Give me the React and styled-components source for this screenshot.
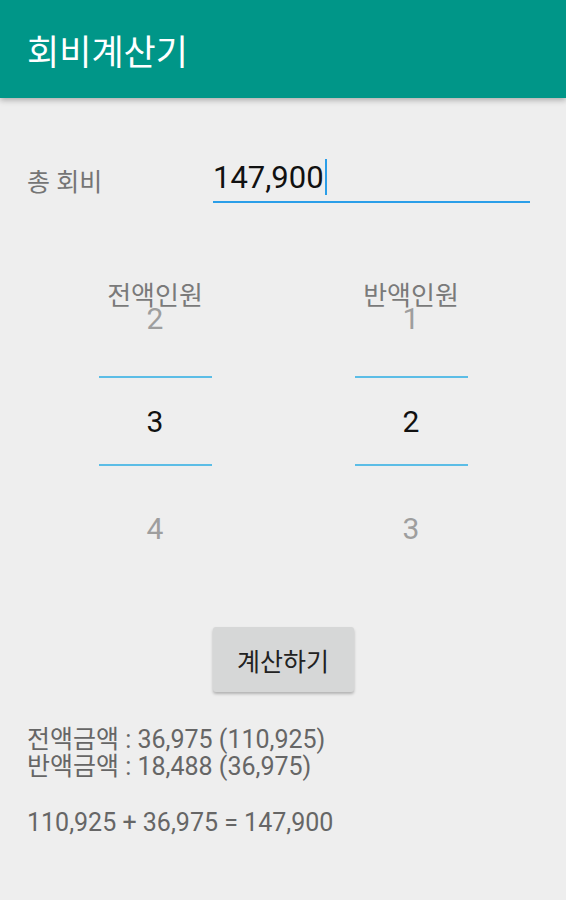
import styled, { createGlobalStyle } from "styled-components";

const GlobalStyle = createGlobalStyle`
	body {
		margin: 0;
		background: #eeeeee;
		font-family: Roboto, "Noto Sans CJK KR", sans-serif;
	}
`;

function Wheel({ label, prev, value, next }) {
	return (
		<WheelBox>
			<WheelLabel>{label}</WheelLabel>
			<Cell $height={110} $padBottom={6} $faded>
				{prev}
			</Cell>
			<Divider />
			<Cell $height={86}>{value}</Cell>
			<Divider />
			<Cell $height={110} $padTop={14} $faded>
				{next}
			</Cell>
		</WheelBox>
	);
}

function App() {
	return (
		<Screen>
			<GlobalStyle />
			<AppBar>
				<Title>회비계산기</Title>
			</AppBar>
			<Content>
				<FieldRow>
					<FieldLabel>총 회비</FieldLabel>
					<Input>
						147,900
						<Caret />
					</Input>
				</FieldRow>
				<Wheels>
					<Wheel label="전액인원" prev="2" value="3" next="4" />
					<Wheel label="반액인원" prev="1" value="2" next="3" />
				</Wheels>
				<ButtonRow>
					<Button>계산하기</Button>
				</ButtonRow>
				<Result>
					<div>전액금액 : 36,975 (110,925)</div>
					<div>반액금액 : 18,488 (36,975)</div>
					<Blank />
					<div>110,925 + 36,975 = 147,900</div>
				</Result>
			</Content>
		</Screen>
	);
}

const Screen = styled.div`
	width: 566px;
	height: 900px;
	background: #eeeeee;
	overflow: hidden;
`;

const AppBar = styled.header`
	height: 98px;
	padding: 0 27px;
	display: flex;
	align-items: center;
	background: #009688;
	box-shadow: 0 2px 6px rgba(0, 0, 0, 0.3);
	position: relative;
`;

const Title = styled.h1`
	margin: 0;
	color: #ffffff;
	font-size: 35px;
	font-weight: 400;
`;

const Content = styled.main`
	padding: 55px 27px 0;
`;

const FieldRow = styled.div`
	display: flex;
	align-items: center;
`;

const FieldLabel = styled.div`
	width: 186px;
	padding-top: 4px;
	font-size: 25px;
	color: #757575;
`;

const Input = styled.div`
	width: 317px;
	height: 48px;
	display: flex;
	align-items: center;
	font-size: 31px;
	color: #111111;
	border-bottom: 2px solid #2a9ee8;
`;

const Caret = styled.span`
	width: 2px;
	height: 36px;
	margin-left: 1px;
	background: #2a9ee8;
`;

const Wheels = styled.div`
	margin-top: 63px;
	display: grid;
	grid-template-columns: 1fr 1fr;
`;

const WheelBox = styled.div`
	width: 113px;
	justify-self: center;
	display: flex;
	flex-direction: column;
	position: relative;
`;

const WheelLabel = styled.div`
	position: absolute;
	top: 15px;
	left: -40px;
	right: -40px;
	text-align: center;
	font-size: 26px;
	line-height: 30px;
	color: #7a7a7a;
`;

const Cell = styled.div`
	height: ${(p) => p.$height}px;
	padding-top: ${(p) => p.$padTop || 0}px;
	padding-bottom: ${(p) => p.$padBottom || 0}px;
	box-sizing: border-box;
	display: flex;
	align-items: center;
	justify-content: center;
	font-size: 30px;
	color: ${(p) => (p.$faded ? "#9e9e9e" : "#111111")};
`;

const Divider = styled.div`
	height: 2px;
	background: #5bbde6;
`;

const ButtonRow = styled.div`
	margin-top: 51px;
	display: flex;
	justify-content: center;
`;

const Button = styled.button`
	width: 141px;
	height: 65px;
	border: none;
	border-radius: 3px;
	background: #d6d7d7;
	box-shadow: 0 2px 3px rgba(0, 0, 0, 0.25);
	font-family: Roboto, "Noto Sans CJK KR", sans-serif;
	font-size: 25px;
	color: #222222;
`;

const Result = styled.div`
	margin-top: 34px;
	font-size: 25px;
	line-height: 27px;
	color: #666666;
`;

const Blank = styled.div`
	height: 29px;
`;

export default App;
